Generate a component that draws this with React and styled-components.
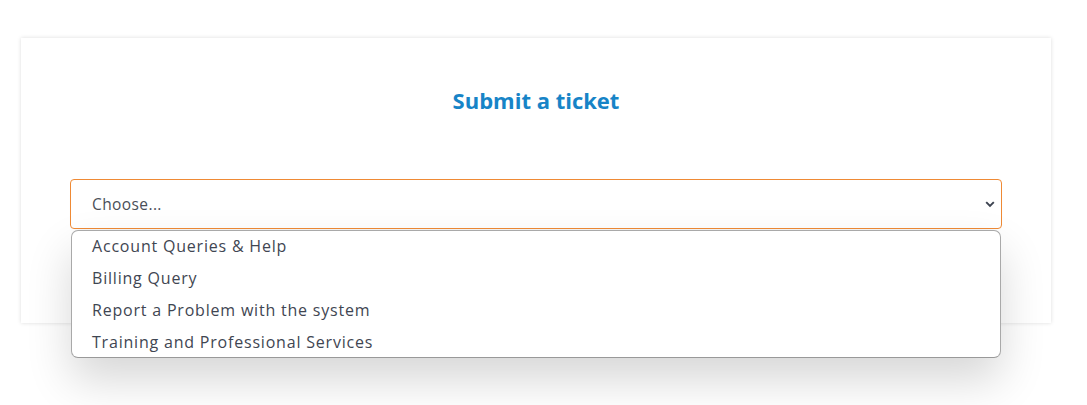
import React from "react";
import styled, { createGlobalStyle } from "styled-components";

const Global = createGlobalStyle`
  html, body { margin: 0; padding: 0; background: #ffffff; }
  body { font-family: "Open Sans", "Noto Sans", sans-serif; overflow: hidden; }
`;

const Page = styled.div`
  width: 1087px;
  height: 405px;
  padding: 38px 36px 0 21px;
  box-sizing: border-box;
`;

const Card = styled.section`
  background: #fff;
  box-shadow: 0 0 4px rgba(0, 0, 0, 0.14);
  height: 285px;
  box-sizing: border-box;
  padding: 48px 49px 0;
  display: flex;
  flex-direction: column;
  align-items: stretch;
`;

const Title = styled.h2`
  margin: 0;
  text-align: center;
  color: #1784c7;
  font-family: "Open Sans", sans-serif;
  font-weight: 700;
  font-size: 22px;
  line-height: 28px;
`;

const Field = styled.div`
  position: relative;
  margin-top: 65px;
`;

const Select = styled.div`
  height: 50px;
  box-sizing: border-box;
  border: 1px solid #ef8a35;
  border-radius: 4px;
  display: flex;
  align-items: center;
  justify-content: space-between;
  padding: 0 6px 0 21px;
  font-size: 15.5px;
  letter-spacing: 0.4px;
  color: #4a4f58;
  box-shadow: 0 6px 8px -6px rgba(0, 0, 0, 0.08);
`;

const Menu = styled.ul`
  position: absolute;
  left: 1px;
  right: 1px;
  top: 51px;
  margin: 0;
  padding: 0;
  list-style: none;
  background: #fff;
  border: 1px solid #a9a9a9;
  border-bottom-color: #999;
  border-radius: 7px;
  box-shadow: 0 22px 45px rgba(0, 0, 0, 0.16);
  height: 128px;
  box-sizing: border-box;
  padding-top: 1px;
`;

const Option = styled.li`
  height: 32px;
  line-height: 28px;
  padding-left: 20px;
  font-size: 16px;
  letter-spacing: 0.8px;
  color: #3f4652;
`;

const Chevron = () => (
  <svg width="10" height="7" viewBox="0 0 10 7">
    <path d="M1.2 1.2 L5 5 L8.8 1.2" fill="none" stroke="#3c4350" strokeWidth="1.9" />
  </svg>
);

const options = [
  "Account Queries & Help",
  "Billing Query",
  "Report a Problem with the system",
  "Training and Professional Services",
];

export default function App() {
  return (
    <>
      <Global />
      <Page>
        <Card>
          <Title>Submit a ticket</Title>
          <Field>
            <Select>
              <span>Choose...</span>
              <Chevron />
            </Select>
            <Menu>
              {options.map((o) => (
                <Option key={o}>{o}</Option>
              ))}
            </Menu>
          </Field>
        </Card>
      </Page>
    </>
  );
}
